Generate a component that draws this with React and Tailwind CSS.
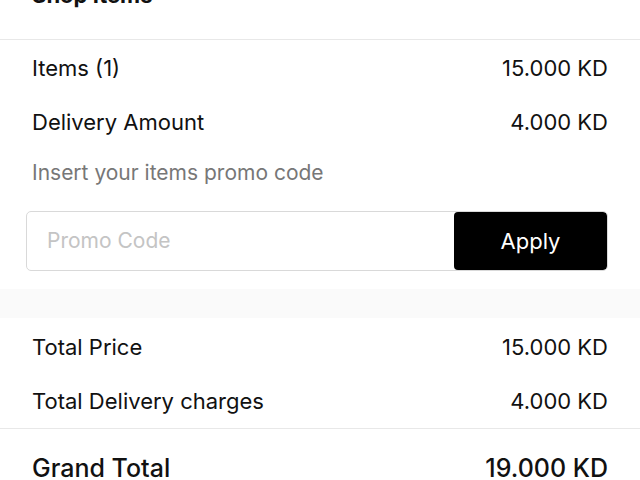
export default function App() {
  const font = { fontFamily: 'Inter, "Noto Sans", sans-serif' };
  return (
    <div className="w-[640px] h-[480px] overflow-hidden bg-white text-[#111]" style={font}>
      <div className="h-[39px] overflow-hidden px-[32px]">
        <h2 className="text-[22px] leading-[28px] font-bold -mt-[19px]">Shop Items</h2>
      </div>
      <div className="h-px bg-[#e8e8e8]" />
      <div className="px-[32px] pt-[14px]">
        <div className="flex justify-between text-[22px] leading-[28px]">
          <span>Items (1)</span>
          <span>15.000 KD</span>
        </div>
        <div className="flex justify-between text-[22px] leading-[28px] mt-[26px]">
          <span>Delivery Amount</span>
          <span>4.000 KD</span>
        </div>
        <div className="text-[21px] leading-[26px] text-[#777] mt-[24px]">Insert your items promo code</div>
      </div>
      <div className="pl-[26px] pr-[32px] mt-[25px]">
        <div className="flex h-[60px] border border-[#d9d9d9] rounded-[5px] overflow-hidden">
          <div className="flex-1 flex items-center pl-[20px] text-[21px] text-[#c4c4c4]">Promo Code</div>
          <button className="w-[153px] bg-black text-white text-[22px] flex items-center justify-center rounded-[4px]">Apply</button>
        </div>
      </div>
      <div className="h-[29px] mt-[18px] bg-[#fafafa]" />
      <div className="px-[32px] pt-[15px]">
        <div className="flex justify-between text-[22px] leading-[28px]">
          <span>Total Price</span>
          <span>15.000 KD</span>
        </div>
        <div className="flex justify-between text-[22px] leading-[28px] mt-[26px]">
          <span>Total Delivery charges</span>
          <span>4.000 KD</span>
        </div>
      </div>
      <div className="h-px bg-[#e8e8e8] mt-[13px]" />
      <div className="px-[32px] pt-[23px]">
        <div className="flex justify-between text-[25px] leading-[32px] font-medium">
          <span>Grand Total</span>
          <span>19.000 KD</span>
        </div>
      </div>
    </div>
  );
}
